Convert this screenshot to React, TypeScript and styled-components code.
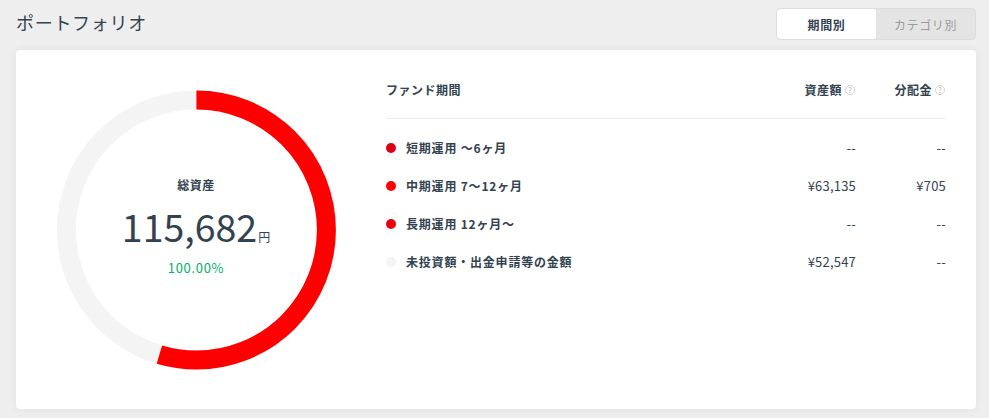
import React from 'react';
import styled, { createGlobalStyle } from 'styled-components';

const GlobalStyle = createGlobalStyle`
  html, body {
    margin: 0;
    padding: 0;
    background: #eeeeee;
    font-family: "Noto Sans CJK JP", "Noto Sans", sans-serif;
    color: #33424f;
  }
`;

const Page = styled.div`
  width: 989px;
  height: 418px;
  box-sizing: border-box;
  padding: 0 13px 0 16px;
  overflow: hidden;
`;

const Header = styled.header`
  height: 50px;
  display: flex;
  justify-content: space-between;
  align-items: flex-start;
`;

const Title = styled.h1`
  margin: 9px 0 0;
  font-size: 18px;
  line-height: 26px;
  font-weight: 400;
  letter-spacing: 0.7px;
`;

const Toggle = styled.div`
  margin-top: 8px;
  width: 200px;
  height: 32px;
  box-sizing: border-box;
  display: flex;
  border: 1px solid #dcdcdc;
  border-radius: 4px;
  background: #e4e4e4;
  overflow: hidden;
`;

const ToggleItem = styled.div<{ $active?: boolean }>`
  width: 99px;
  display: flex;
  align-items: center;
  justify-content: center;
  font-size: 12px;
  letter-spacing: 0.6px;
  font-weight: ${(p) => (p.$active ? 700 : 400)};
  color: ${(p) => (p.$active ? '#33424f' : '#9a9a9a')};
  background: ${(p) => (p.$active ? '#ffffff' : 'transparent')};
  border-radius: ${(p) => (p.$active ? '3px' : '0')};
`;

const Card = styled.section`
  height: 359px;
  box-sizing: border-box;
  display: flex;
  align-items: flex-start;
  background: #fff;
  border-radius: 4px;
  box-shadow: 0 0 10px rgba(0, 0, 0, 0.06);
  padding: 0 30px 0 40px;
`;

const Donut = styled.div`
  position: relative;
  flex: none;
  width: 280px;
  height: 280px;
  margin: 40px 50px 0 0;

  svg {
    overflow: visible;
  }
`;

const DonutCenter = styled.div`
  position: absolute;
  inset: 0;
  padding-bottom: 6px;
  box-sizing: border-box;
  display: flex;
  flex-direction: column;
  align-items: center;
  justify-content: center;
`;

const DonutLabel = styled.div`
  font-size: 12px;
  line-height: 18px;
  font-weight: 700;
  letter-spacing: 0.5px;
`;

const DonutValue = styled.div`
  display: flex;
  align-items: baseline;
  font-size: 37.5px;
  line-height: 48px;
  margin-top: 8px;
`;

const DonutUnit = styled.span`
  font-size: 12px;
  margin-left: 1px;
`;

const DonutRate = styled.div`
  font-size: 13px;
  line-height: 20px;
  letter-spacing: 0.7px;
  color: #00b16a;
  margin-top: -3px;
`;

const Table = styled.div`
  flex: 1;
  min-width: 0;
`;

const HeadRow = styled.div`
  display: grid;
  grid-template-columns: 1fr 90px 90px;
  height: 69px;
  align-items: center;
  border-bottom: 1px solid #eeeeee;
  margin-bottom: 9px;
  padding-top: 10px;
  box-sizing: border-box;
  font-size: 12px;
  font-weight: 700;
  letter-spacing: 0.5px;
`;

const HeadCell = styled.div<{ $right?: boolean }>`
  display: flex;
  align-items: center;
  justify-content: ${(p) => (p.$right ? 'flex-end' : 'flex-start')};
  gap: 3px;
`;

const Help = styled.span`
  width: 10px;
  height: 10px;
  margin: 1px 1px 0 0;
  box-sizing: border-box;
  border: 1px solid #d4d4d4;
  border-radius: 50%;
  color: #c0c0c0;
  font-size: 8px;
  line-height: 8px;
  font-weight: 400;
  letter-spacing: 0;
  text-align: center;
`;

const Row = styled.div`
  display: grid;
  grid-template-columns: 1fr 90px 90px;
  height: 38px;
  align-items: center;
  font-size: 12px;
`;

const RowName = styled.div`
  display: flex;
  align-items: center;
  gap: 10px;
  font-weight: 700;
  letter-spacing: 0.8px;
`;

const Dot = styled.span<{ $color: string }>`
  width: 10px;
  height: 10px;
  margin-top: 1px;
  border-radius: 50%;
  background: ${(p) => p.$color};
`;

const Amount = styled.div`
  text-align: right;
  font-size: 13px;
  letter-spacing: 0.2px;
`;

const rows = [
  { color: '#dd0011', name: '短期運用 〜6ヶ月', amount: '--', dist: '--' },
  { color: '#ff0000', name: '中期運用 7〜12ヶ月', amount: '¥63,135', dist: '¥705' },
  { color: '#ee0011', name: '長期運用 12ヶ月〜', amount: '--', dist: '--' },
  { color: '#f4f4f4', name: '未投資額・出金申請等の金額', amount: '¥52,547', dist: '--' },
];

const radius = 130;
const circumference = 2 * Math.PI * radius;
const share = 63135 / 115682;

const App = () => (
  <Page>
    <GlobalStyle />
    <Header>
      <Title>ポートフォリオ</Title>
      <Toggle>
        <ToggleItem $active>期間別</ToggleItem>
        <ToggleItem>カテゴリ別</ToggleItem>
      </Toggle>
    </Header>
    <Card>
      <Donut>
        <svg width="280" height="280" viewBox="0 0 280 280">
          <circle cx="140.4" cy="140" r={radius} fill="none" stroke="#f4f4f4" strokeWidth="19" />
          <circle
            cx="140.4"
            cy="140"
            r={radius}
            fill="none"
            stroke="#ff0000"
            strokeWidth="19"
            strokeDasharray={`${circumference * share} ${circumference}`}
            transform="rotate(-90 140.4 140)"
          />
        </svg>
        <DonutCenter>
          <DonutLabel>総資産</DonutLabel>
          <DonutValue>
            115,682<DonutUnit>円</DonutUnit>
          </DonutValue>
          <DonutRate>100.00%</DonutRate>
        </DonutCenter>
      </Donut>
      <Table>
        <HeadRow>
          <HeadCell>ファンド期間</HeadCell>
          <HeadCell $right>
            資産額<Help>?</Help>
          </HeadCell>
          <HeadCell $right>
            分配金<Help>?</Help>
          </HeadCell>
        </HeadRow>
        {rows.map((r) => (
          <Row key={r.name}>
            <RowName>
              <Dot $color={r.color} />
              {r.name}
            </RowName>
            <Amount>{r.amount}</Amount>
            <Amount>{r.dist}</Amount>
          </Row>
        ))}
      </Table>
    </Card>
  </Page>
);

export default App;
